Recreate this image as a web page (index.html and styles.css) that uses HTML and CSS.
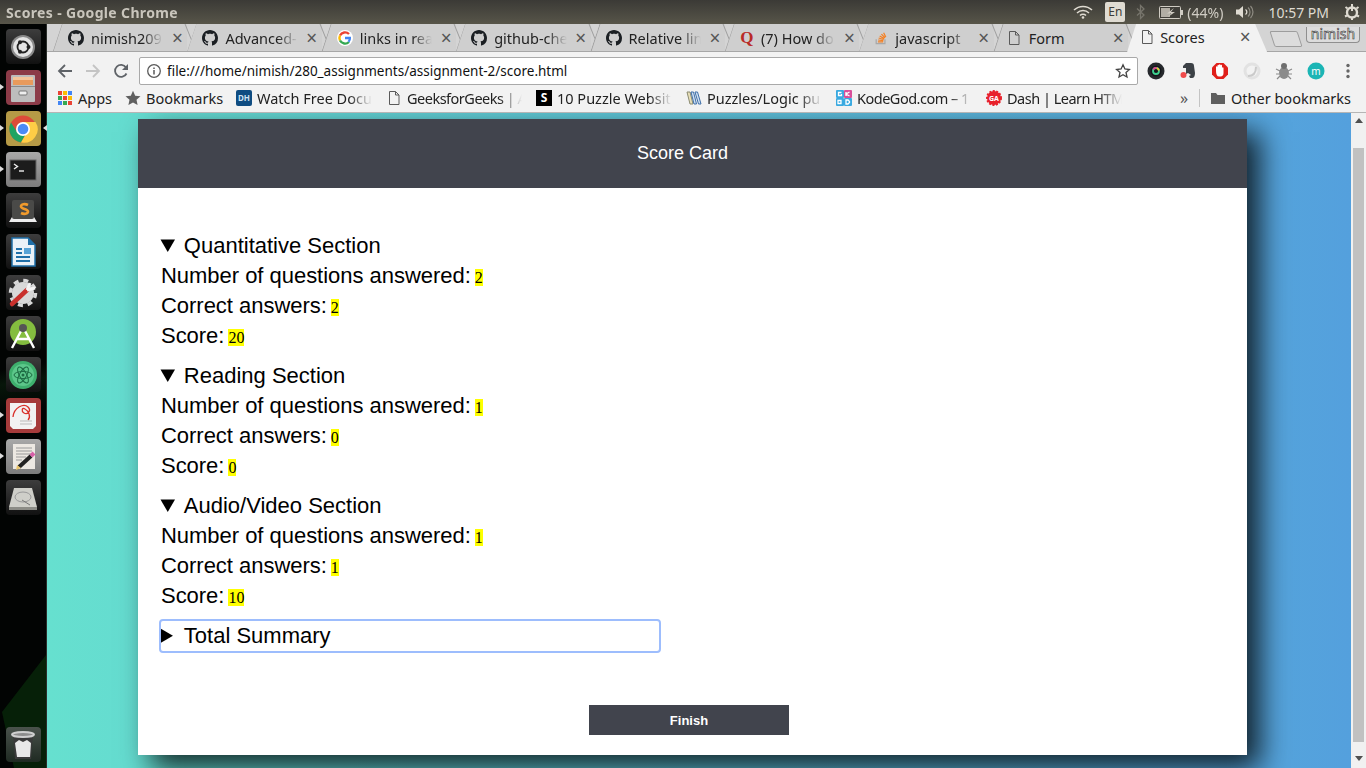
FILE: index.html
```html
<!DOCTYPE html>
<html lang="en">
<head>
  <meta charset="utf-8" />
  <title>Scores</title>
  <link rel="stylesheet" href="styles.css">
</head>
<body>
  <svg class="defs" width="0" height="0">
    <symbol id="gh" viewBox="0 0 16 16"><path fill="#1b1f23" d="M8 0C3.58 0 0 3.58 0 8c0 3.54 2.29 6.53 5.47 7.59.4.07.55-.17.55-.38 0-.19-.01-.82-.01-1.49-2.01.37-2.53-.49-2.69-.94-.09-.23-.48-.94-.82-1.13-.28-.15-.68-.52-.01-.53.63-.01 1.08.58 1.23.82.72 1.21 1.87.87 2.33.66.07-.52.28-.87.51-1.07-1.78-.2-3.64-.89-3.64-3.95 0-.87.31-1.59.82-2.15-.08-.2-.36-1.02.08-2.12 0 0 .67-.21 2.2.82.64-.18 1.32-.27 2-.27s1.36.09 2 .27c1.53-1.04 2.2-.82 2.2-.82.44 1.1.16 1.92.08 2.12.51.56.82 1.27.82 2.15 0 3.07-1.87 3.75-3.65 3.95.29.25.54.73.54 1.48 0 1.07-.01 1.93-.01 2.2 0 .21.15.46.55.38A8.01 8.01 0 0 0 16 8c0-4.42-3.58-8-8-8z"/></symbol>
    <symbol id="doc" viewBox="0 0 16 16"><path fill="none" stroke="#5a5a5a" d="M3.500 1.500h6l3.500 3.500v9.500h-9.500zM9.500 1.500v3.500h3.500"/></symbol>
  </svg>

  <!-- UNITY PANEL -->
  <header class="panel">
    <span class="panel__title">Scores - Google Chrome</span>
    <div class="panel__tray">
      <svg class="tray-wifi" width="20" height="14" viewBox="0 0 20 14"><g fill="none" stroke="#dfdbd2" stroke-width="1.500"><path d="M1 5a13 13 0 0 1 18 0"/><path d="M4 8a8.500 8.500 0 0 1 12 0"/><path d="M7 10.500a4.200 4.200 0 0 1 6 0"/></g><circle cx="10" cy="12.500" r="1.300" fill="#dfdbd2"/></svg>
      <span class="tray-lang">En</span>
      <svg width="10" height="16" viewBox="0 0 10 16"><path fill="none" stroke="#77756c" stroke-width="1.300" d="M1 4.500l7 6.500-3.500 3.500V1.500L8 5 1 11.500"/></svg>
      <span class="tray-batt">
        <svg width="24" height="13" viewBox="0 0 24 13"><rect x=".5" y=".5" width="21" height="12" rx="1" fill="#3f3e39" stroke="#dfdbd2"/><rect x="2" y="2" width="9" height="9" fill="#bdb9b0"/><rect x="22" y="4" width="2" height="5" fill="#dfdbd2"/><path fill="#dfdbd2" d="M15 2L8 7.500h4L9 11l7-5h-4z"/></svg>
        (44%)
      </span>
      <svg width="20" height="14" viewBox="0 0 20 14"><path fill="#dfdbd2" d="M1 4.500h3L8 1v12L4 9.500H1z"/><path fill="none" stroke="#dfdbd2" stroke-width="1.300" d="M10.500 4.500a3 3 0 0 1 0 5"/><path fill="none" stroke="#8f8c83" stroke-width="1.200" d="M13 2.500a6 6 0 0 1 0 9M15.500 1a8.500 8.500 0 0 1 0 12"/></svg>
      <span class="tray-time">10:57 PM</span>
      <svg width="16" height="16" viewBox="0 0 16 16"><circle cx="8" cy="8.500" r="5" fill="none" stroke="#dfdbd2" stroke-width="2.400"/><path stroke="#dfdbd2" stroke-width="2" d="M8 0v7M1.500 3l2 1.500M14.500 3l-2 1.500M1 12.500l2-1M15 12.500l-2-1M8 14v2"/></svg>
    </div>
  </header>

  <div class="desktop">
    <!-- LAUNCHER -->
    <nav class="launcher">
      <div class="tile tile--dark">
        <svg width="34" height="34" viewBox="0 0 34 34"><circle cx="17" cy="17" r="12" fill="#8a8a8a"/><circle cx="17" cy="17" r="10" fill="#e4e4e4"/><circle cx="17" cy="17" r="5.500" fill="none" stroke="#222" stroke-width="1.800"/><circle cx="22.500" cy="17" r="2" fill="#222"/><circle cx="14" cy="12.200" r="2" fill="#222"/><circle cx="14" cy="21.800" r="2" fill="#222"/></svg>
      </div>
      <div class="tile tile--maroon tile--open">
        <svg width="34" height="34" viewBox="0 0 34 34"><rect x="5" y="4" width="24" height="27" rx="1" fill="#bdbdbd"/><rect x="7" y="6" width="20" height="8" fill="#e89a5c"/><rect x="7" y="6" width="20" height="3" fill="#f4c49a"/><rect x="5" y="15" width="24" height="1" fill="#8a8a8a"/><rect x="13" y="20" width="8" height="4" rx="1" fill="#eee" stroke="#777"/></svg>
      </div>
      <div class="tile tile--gold tile--open tile--active">
        <svg width="34" height="34" viewBox="0 0 34 34"><circle cx="17" cy="17" r="13.500" fill="#dd4b39"/><path fill="#1da462" d="M5 10.500A13.500 13.500 0 0 0 15 30.400l6-10.400-4 3-6-3z"/><path fill="#ffcd46" d="M17 10h12.500A13.500 13.500 0 0 1 15 30.400l6-10.400a7 7 0 0 0 1-6z"/><circle cx="17" cy="17" r="7" fill="#fff"/><circle cx="17" cy="17" r="5.300" fill="#4c8bf5"/></svg>
      </div>
      <div class="tile tile--grey tile--open">
        <svg width="34" height="34" viewBox="0 0 34 34"><rect x="4" y="7" width="26" height="20" fill="#1c1c1c" stroke="#666"/><path fill="none" stroke="#eee" stroke-width="1.400" d="M8 11l3.500 2.500L8 16"/><path stroke="#eee" stroke-width="1.400" d="M13 18h5"/></svg>
      </div>
      <div class="tile tile--dark">
        <svg width="34" height="34" viewBox="0 0 34 34"><path fill="#eee" d="M3 28l3-5h22l3 5z"/><rect x="6" y="6" width="22" height="19" rx="2" fill="#4a4a48"/><path fill="none" stroke="#f09a2c" stroke-width="2.600" d="M22 11c-3-1.500-7-1-7 1.500s7 2.500 7 5-4 3-7 1.500"/></svg>
      </div>
      <div class="tile tile--dark">
        <svg width="34" height="34" viewBox="0 0 34 34"><path fill="#eaf1f7" stroke="#1f6fa8" stroke-width="1.500" d="M6 3h16l7 7v21H6z"/><path fill="#1f6fa8" d="M22 3l7 7h-7z"/><path stroke="#1f6fa8" stroke-width="2" d="M10 14h6M10 18h6M10 22h14M10 26h14"/><rect x="18" y="13" width="7" height="6" fill="#58a3d6"/></svg>
      </div>
      <div class="tile tile--dark">
        <svg width="34" height="34" viewBox="0 0 34 34"><circle cx="17" cy="17" r="11" fill="#d8d8d8"/><circle cx="17" cy="17" r="12.500" fill="none" stroke="#d8d8d8" stroke-width="3.500" stroke-dasharray="5 4.800"/><path stroke="#c9302c" stroke-width="4.500" stroke-linecap="round" d="M6 28L21 14"/><path fill="none" stroke="#f4f4f4" stroke-width="3" d="M21 14l3-7M21 14l8-2"/></svg>
      </div>
      <div class="tile tile--dark">
        <svg width="34" height="34" viewBox="0 0 34 34"><circle cx="17" cy="15" r="13" fill="#84bd3f"/><path fill="none" stroke="#fff" stroke-width="2.400" d="M6 31l9-17M28 31l-9-17M11 22h12"/><circle cx="17" cy="11" r="4" fill="#555"/></svg>
      </div>
      <div class="tile tile--dark">
        <svg width="34" height="34" viewBox="0 0 34 34"><circle cx="17" cy="17" r="14" fill="#3eaf6d"/><circle cx="17" cy="17" r="11" fill="#5cc78a"/><g fill="none" stroke="#1d6b43"><ellipse cx="17" cy="17" rx="9" ry="3.500"/><ellipse cx="17" cy="17" rx="9" ry="3.500" transform="rotate(60 17 17)"/><ellipse cx="17" cy="17" rx="9" ry="3.500" transform="rotate(120 17 17)"/></g><circle cx="17" cy="17" r="1.500" fill="#1d6b43"/></svg>
      </div>
      <div class="tile tile--red tile--open">
        <svg width="34" height="34" viewBox="0 0 34 34"><path fill="#f2f2f2" d="M4 4h26v23l-3 3H7l-3-3z"/><path fill="none" stroke="#d9312b" stroke-width="1.300" d="M7 18C8 8 18 4 22 8s-1 8-4 6-2-6 1-4c4 2 6 8 3 11"/><path stroke="#bbb" d="M14 22h12M14 25h12"/></svg>
      </div>
      <div class="tile tile--grey tile--open">
        <svg width="34" height="34" viewBox="0 0 34 34"><rect x="7" y="4" width="22" height="25" fill="#ece8e2"/><path stroke="#9a9a9a" d="M10 8h16M10 11h16M10 14h16M10 17h10M10 20h6"/><path stroke="#222" stroke-width="4" d="M13 27l12-11"/><path stroke="#d75fa8" stroke-width="4" d="M25 16l3-3"/><path fill="#e9c46a" d="M10 30l1-5 4 3z"/></svg>
      </div>
      <div class="tile tile--dark">
        <svg width="34" height="34" viewBox="0 0 34 34"><path fill="#cfcfc9" d="M8 7h18l5 19H3z"/><path fill="#8c8c86" d="M3 26h28v3H3z"/><ellipse cx="17" cy="16" rx="8" ry="5" fill="none" stroke="#999"/><path stroke="#777" d="M16 19l8 5"/></svg>
      </div>
      <div class="tile tile--trash">
        <svg width="34" height="34" viewBox="0 0 34 34"><path fill="#3a3a3a" d="M7 7h20l-2 24H9z"/><path fill="#e8e8e8" d="M9 15l4-3 4 2 4-2 4 3-1 14H11z"/><ellipse cx="17" cy="6.500" rx="11" ry="2.500" fill="#8c8c8c" stroke="#cfcfcf" stroke-width="2"/></svg>
      </div>
    </nav>

    <div class="browser">
      <!-- PESTAÑAS -->
      <div class="tabs">
        <div class="tab"><svg class="fav" viewBox="0 0 16 16"><use href="#gh"/></svg><span class="tab__text">nimish209</span><span class="tab__close">×</span></div>
        <div class="tab"><svg class="fav" viewBox="0 0 16 16"><use href="#gh"/></svg><span class="tab__text">Advanced-</span><span class="tab__close">×</span></div>
        <div class="tab">
          <svg class="fav" viewBox="0 0 16 16"><circle cx="8" cy="8" r="8" fill="#fff"/><path fill="none" stroke="#ea4335" stroke-width="2.400" d="M3 5.500A5.700 5.700 0 0 1 12 4"/><path fill="none" stroke="#fbbc05" stroke-width="2.400" d="M3 5.500a5.700 5.700 0 0 0 0 5"/><path fill="none" stroke="#34a853" stroke-width="2.400" d="M3 10.500a5.700 5.700 0 0 0 9 1.500"/><path fill="#4285f4" d="M8 6.800h6v1.200c0 2-.8 3.400-1.600 4.400l-1.800-1.400c.5-.4.9-1 1-1.800H8z"/></svg>
          <span class="tab__text">links in rea</span><span class="tab__close">×</span></div>
        <div class="tab"><svg class="fav" viewBox="0 0 16 16"><use href="#gh"/></svg><span class="tab__text">github-che</span><span class="tab__close">×</span></div>
        <div class="tab"><svg class="fav" viewBox="0 0 16 16"><use href="#gh"/></svg><span class="tab__text">Relative lin</span><span class="tab__close">×</span></div>
        <div class="tab"><span class="fav fav--quora">Q</span><span class="tab__text">(7) How do</span><span class="tab__close">×</span></div>
        <div class="tab">
          <svg class="fav fav--so" viewBox="0 0 16 16"><path fill="none" stroke="#a8a8a8" stroke-width="1.400" d="M2.500 9.500v5h10v-5"/><path stroke="#f48024" stroke-width="1.400" d="M4.500 12.500h6M4.700 10.300l6 .6M5.300 8l5.800 1.700M6.500 5.700l5.200 3M8.500 3.500l4 4.200M11 2l2.500 5"/></svg>
          <span class="tab__text">javascript</span><span class="tab__close">×</span></div>
        <div class="tab"><svg class="fav fav--doc" viewBox="0 0 16 16"><use href="#doc"/></svg><span class="tab__text tab__text--full">Form</span><span class="tab__close">×</span></div>
        <div class="tab tab--active"><svg class="fav fav--doc" viewBox="0 0 16 16"><use href="#doc"/></svg><span class="tab__text tab__text--full">Scores</span><span class="tab__close">×</span></div>
        <div class="tab-new"></div>
        <span class="profile">nimish</span>
      </div>

      <!-- BARRA DE DIRECCIÓN -->
      <div class="toolbar">
        <svg class="nav" viewBox="0 0 16 16"><path fill="none" stroke="#5f6368" stroke-width="1.800" d="M15 8H2M8 2L2 8l6 6"/></svg>
        <svg class="nav" viewBox="0 0 16 16"><path fill="none" stroke="#c4c4c4" stroke-width="1.800" d="M1 8h13M8 2l6 6-6 6"/></svg>
        <svg class="nav" viewBox="0 0 16 16"><path fill="none" stroke="#5f6368" stroke-width="1.800" d="M13.500 10.500A6 6 0 1 1 13 4.500"/><path fill="#5f6368" d="M15 1v6H9z"/></svg>
        <div class="omnibox">
          <svg width="16" height="16" viewBox="0 0 16 16"><circle cx="8" cy="8" r="6.300" fill="none" stroke="#5a5a5a" stroke-width="1.300"/><path stroke="#5a5a5a" stroke-width="1.500" d="M8 7v4.500M8 4.500v1.500"/></svg>
          <span class="omnibox__url">file:///home/nimish/280_assignments/assignment-2/score.html</span>
          <svg width="16" height="16" viewBox="0 0 16 16"><path fill="none" stroke="#444" stroke-width="1.300" d="M8 1.800l1.900 4.200 4.500.5-3.400 3 1 4.500L8 11.700 4 14l1-4.500-3.400-3 4.500-.5z"/></svg>
        </div>
        <div class="extensions">
          <svg class="ext" viewBox="0 0 18 18"><circle cx="9" cy="9" r="8.500" fill="#26282c"/><circle cx="9" cy="9" r="5.500" fill="#14161a"/><circle cx="9" cy="9" r="3" fill="none" stroke="#3ecf8e" stroke-width="1.800"/><path fill="none" stroke="#e6398f" stroke-width="1.800" d="M6.300 7.700a3 3 0 0 1 3.500-1.600"/><path fill="none" stroke="#f2c230" stroke-width="1.800" d="M9.800 6.100a3 3 0 0 1 2.100 2.400"/></svg>
          <svg class="ext" viewBox="0 0 18 18"><path fill="#3c4146" d="M4 4l3-3h5c2 0 3 1 3 3l1 7c0 3-1 5-3 5h-2l-1-2 2-1-3-2-2 1V6H4z"/><circle cx="4.500" cy="13" r="3" fill="#f04b4b"/></svg>
          <svg class="ext" viewBox="0 0 18 18"><path fill="#e0201b" d="M5.500 1h7L17 5.500v7L12.500 17h-7L1 12.500v-7z"/><path fill="#fff" d="M5 9V5c0-1 1.500-1 1.500 0V3.500c0-1 1.500-1 1.500 0V3c0-1 1.500-1 1.500 0v.5c0-1 1.500-1 1.500 0V6c0-1 1.500-1 1.500 0v5c0 2-1 3.500-3 3.500H8c-2 0-3-2-3-5.500z"/></svg>
          <svg class="ext" viewBox="0 0 18 18"><circle cx="9" cy="9" r="7" fill="none" stroke="#e2e2e2" stroke-width="3"/><path fill="none" stroke="#cacaca" stroke-width="2" d="M5 14c5 0 8-3 8-9"/></svg>
          <svg class="ext" viewBox="0 0 18 18"><ellipse cx="9" cy="11" rx="5" ry="6" fill="#8b8b8b"/><circle cx="9" cy="4" r="3" fill="#6f6f6f"/><path stroke="#8b8b8b" stroke-width="1.200" d="M1 7l4 2M17 7l-4 2M1 12h3M17 12h-3M2 17l3-3M16 17l-3-3"/></svg>
          <svg class="ext" viewBox="0 0 18 18"><circle cx="9" cy="9" r="8.500" fill="#1bb5b5"/><text x="9" y="12.500" class="ext__m">m</text></svg>
        </div>
        <svg class="menu" viewBox="0 0 4 16"><circle cx="2" cy="2.500" r="1.700" fill="#666"/><circle cx="2" cy="8" r="1.700" fill="#666"/><circle cx="2" cy="13.500" r="1.700" fill="#666"/></svg>
      </div>

      <!-- MARCADORES -->
      <div class="bookmarks">
        <div class="bm bm--apps">
          <svg class="fav" viewBox="0 0 16 16"><g><rect x="1" y="1" width="4" height="4" fill="#ea4335"/><rect x="6" y="1" width="4" height="4" fill="#fbbc05"/><rect x="11" y="1" width="4" height="4" fill="#4285f4"/><rect x="1" y="6" width="4" height="4" fill="#34a853"/><rect x="6" y="6" width="4" height="4" fill="#ea4335"/><rect x="11" y="6" width="4" height="4" fill="#fbbc05"/><rect x="1" y="11" width="4" height="4" fill="#4285f4"/><rect x="6" y="11" width="4" height="4" fill="#34a853"/><rect x="11" y="11" width="4" height="4" fill="#ea4335"/></g></svg>
          <span>Apps</span>
        </div>
        <div class="bm bm--plain">
          <svg class="fav" viewBox="0 0 16 16"><path fill="#5f5f5f" d="M8 .8l2.200 4.900 5.300.6-4 3.500 1.100 5.300L8 12.400l-4.600 2.700 1.100-5.300-4-3.500 5.300-.6z"/></svg>
          <span>Bookmarks</span>
        </div>
        <div class="bm"><span class="fav fav--dh">DH</span><span class="bm__text">Watch Free Docu</span></div>
        <div class="bm"><svg class="fav" viewBox="0 0 16 16"><use href="#doc"/></svg><span class="bm__text bm__text--tight">GeeksforGeeks | A</span></div>
        <div class="bm"><span class="fav fav--s">S</span><span class="bm__text">10 Puzzle Websit</span></div>
        <div class="bm">
          <svg class="fav" viewBox="0 0 16 16"><path fill="#e8dfb8" stroke="#8a8a70" d="M1 2l3 0 3 12-3 0z"/><path fill="#cfe0f2" stroke="#3d6ea8" d="M5 2l2.500 0 3 12-2.500 0z"/><path fill="#cfe0f2" stroke="#3d6ea8" d="M9 2l2.500 0 3.500 12-2.500 0z"/></svg>
          <span class="bm__text">Puzzles/Logic pu</span></div>
        <div class="bm">
          <svg class="fav" viewBox="0 0 16 16"><rect x="0" y="0" width="8" height="8" rx="1" fill="#39a9e0"/><rect x="8" y="0" width="8" height="8" rx="1" fill="#d94f9a"/><rect x="0" y="8" width="8" height="8" rx="1" fill="#39a9e0"/><rect x="8" y="8" width="8" height="8" rx="1" fill="#39a9e0"/><path stroke="#fff" stroke-width="1.300" fill="none" d="M5.500 2.500h-3v3h3V4M10 2v4M13.500 2L10 4l3.500 2M2 10.500h3v3H2zM10 10h2l1.500 1.500v1L12 14h-2z"/></svg>
          <span class="bm__text bm__text--tight">KodeGod.com – 1</span></div>
        <div class="bm">
          <svg class="fav" viewBox="0 0 16 16"><circle cx="8" cy="8" r="7" fill="#e8212b" stroke="#e8212b" stroke-dasharray="2 1.500" stroke-width="2"/><text x="8" y="11" class="fav__ga">GA</text></svg>
          <span class="bm__text bm__text--tight">Dash | Learn HTM</span></div>
        <span class="bm-more">»</span>
        <span class="bm-sep"></span>
        <div class="bm bm--plain bm--other">
          <svg class="fav" viewBox="0 0 16 16"><path fill="#5f5f5f" d="M1 3h5l1.500 2H15v9H1z"/></svg>
          <span>Other bookmarks</span>
        </div>
      </div>

      <!-- PÁGINA -->
      <div class="viewport">
        <main class="page">
          <section class="card">
            <h1 class="card__head">Score Card</h1>
            <div class="card__body">
              <details class="section" open>
                <summary>Quantitative Section</summary>
                <p><span class="label">Number of questions answered:</span> <mark>2</mark></p>
                <p><span class="label">Correct answers:</span> <mark>2</mark></p>
                <p><span class="label">Score:</span> <mark>20</mark></p>
              </details>
              <details class="section" open>
                <summary>Reading Section</summary>
                <p><span class="label">Number of questions answered:</span> <mark>1</mark></p>
                <p><span class="label">Correct answers:</span> <mark>0</mark></p>
                <p><span class="label">Score:</span> <mark>0</mark></p>
              </details>
              <details class="section" open>
                <summary>Audio/Video Section</summary>
                <p><span class="label">Number of questions answered:</span> <mark>1</mark></p>
                <p><span class="label">Correct answers:</span> <mark>1</mark></p>
                <p><span class="label">Score:</span> <mark>10</mark></p>
              </details>
              <details class="section">
                <summary class="is-focused">Total Summary</summary>
              </details>
              <button class="finish" type="button">Finish</button>
            </div>
          </section>
        </main>
        <div class="scrollbar">
          <span class="scrollbar__up"></span>
          <span class="scrollbar__thumb"></span>
          <span class="scrollbar__down"></span>
        </div>
      </div>
    </div>
  </div>
</body>
</html>
```

FILE: styles.css
```css
/* ===== RESET ===== */
*, *::before, *::after {
  margin: 0;
  padding: 0;
  box-sizing: border-box;
}

html, body {
  width: 1366px;
  height: 768px;
  overflow: hidden;
}

body {
  display: flex;
  flex-direction: column;
  font-family: "Noto Sans", sans-serif;
  background: #000;
}

.defs {
  position: absolute;
}

/* ===== UNITY PANEL ===== */
.panel {
  height: 24px;
  flex: none;
  display: flex;
  align-items: center;
  justify-content: space-between;
  padding: 0 6px;
  background: linear-gradient(to bottom, #3b3a36, #575549);
  color: #dfdbd2;
}

.panel__title {
  font-size: 14px;
  font-weight: 700;
  letter-spacing: .35px;
  opacity: .85;
}

.panel__tray {
  display: flex;
  align-items: center;
  font-size: 14px;
}

.tray-lang {
  width: 20px;
  height: 20px;
  margin: 0 11px 0 12px;
  border-radius: 2px;
  background: #dfdbd2;
  color: #3c3b37;
  font-size: 12px;
  line-height: 20px;
  text-align: center;
}

.tray-batt {
  display: flex;
  align-items: center;
  gap: 4px;
  margin: 0 12px 0 13px;
  opacity: .9;
}

.tray-time {
  margin: 0 15px 0 13px;
}

/* ===== LAUNCHER ===== */
.desktop {
  flex: 1;
  min-height: 0;
  display: flex;
}

.launcher {
  position: relative;
  width: 47px;
  flex: none;
  display: flex;
  flex-direction: column;
  align-items: center;
  gap: 6px;
  padding: 5px 0 6px;
  border-right: 1px solid #2b2f2b;
  background: linear-gradient(170deg, #020403 46%, #07160a 48%, #020403 52%);
}

/* triangulos del fondo de pantalla */
.launcher::before {
  content: '';
  position: absolute;
  inset: 0;
  background: #062008;
  clip-path: polygon(100% 631px, 2px 688px, 14px 744px, 100% 744px);
}

.tile {
  position: relative;
  width: 35px;
  height: 35px;
  display: flex;
  align-items: center;
  justify-content: center;
  border-radius: 4px;
}

.tile--dark {
  background: linear-gradient(to bottom, #3d3d3d, #111);
}
.tile--maroon {
  background: #8c3b48;
}
.tile--gold {
  background: #b59a46;
}
.tile--grey {
  background: linear-gradient(to bottom, #a8a8a8, #7c7c7c);
}
.tile--red {
  background: #a63b3b;
}
.tile--trash {
  margin-top: auto;
  background: linear-gradient(to bottom, #4a524c, #1f2a22);
}

/* puntito de app abierta */
.tile--open::before {
  content: '';
  position: absolute;
  left: -6px;
  top: 14px;
  border: 3.5px solid transparent;
  border-left: 4px solid #ddd;
}
.tile--active::after {
  content: '';
  position: absolute;
  right: -6px;
  top: 14px;
  border: 3.5px solid transparent;
  border-right: 4px solid #ddd;
}

/* ===== NAVEGADOR ===== */
.browser {
  flex: 1;
  min-width: 0;
  display: flex;
  flex-direction: column;
}

.tabs {
  height: 28px;
  flex: none;
  display: flex;
  padding-left: 6px;
  background: #d4d4d4;
  border-bottom: 1px solid #a6a6a6;
  font-size: 14.5px;
  color: #222;
  position: relative;
}

.tab {
  width: 134.4px;
  flex: none;
  display: flex;
  align-items: center;
  gap: 7px;
  padding: 1px 3px 0 15px;
  position: relative;
  background: #cfcfcf;
  clip-path: polygon(0 100%, 9px 0, 100% 0, calc(100% + 12px) 100%);
}

.tab::before {
  content: '';
  position: absolute;
  left: 4px;
  top: -2px;
  bottom: -2px;
  width: 1px;
  background: #9d9d9d;
  transform: skewX(-18deg);
}

.tab::after {
  content: '';
  position: absolute;
  right: -4px;
  top: -2px;
  bottom: -2px;
  width: 1px;
  background: #9d9d9d;
  transform: skewX(22deg);
}

.tab--active {
  width: 140px;
  height: 28px;
  margin-left: -1px;
  padding: 0 15px 2px 15px;
  gap: 5px;
  background: #f2f2f2;
  clip-path: polygon(0 100%, 9px 0, calc(100% - 12px) 0, 100% 100%);
  z-index: 2;
}

.tab--active::before,
.tab--active::after {
  display: none;
}

.tab__text {
  flex: 1;
  min-width: 0;
  overflow: hidden;
  white-space: nowrap;
  -webkit-mask-image: linear-gradient(to right, #000 72%, transparent);
  mask-image: linear-gradient(to right, #000 72%, transparent);
}

.tab__text--full {
  -webkit-mask-image: none;
  mask-image: none;
}

.tab__close {
  flex: none;
  width: 14px;
  font-size: 19px;
  line-height: 1;
  text-align: center;
  color: #555;
}

.tab-new {
  width: 28px;
  height: 16px;
  margin: 7px 0 0 5px;
  background: #dcdcdc;
  border: 1px solid #9d9d9d;
  border-radius: 2px;
  transform: skewX(18deg);
}

.profile {
  width: 54px;
  height: 16px;
  margin: 3px 6px 0 auto;
  font-size: 14px;
  line-height: 14px;
  text-align: center;
  color: #fff;
  -webkit-text-stroke: .6px #333;
  background: #dcdcdc;
  border: 1px solid #8f8f8f;
  border-top: 0;
  border-radius: 0 0 4px 4px;
}

.fav {
  width: 16px;
  height: 16px;
  flex: none;
}

.fav--doc {
  margin-left: -3px;
}

.fav--so {
  width: 14px;
}

.fav--quora {
  width: 14px;
  color: #b92b27;
  font: 700 17px/16px "Liberation Serif", serif;
  text-align: center;
}

.fav--dh {
  background: #0f4c81;
  border-radius: 2px;
  color: #cfe2f2;
  font-size: 8px;
  font-weight: 700;
  line-height: 16px;
  text-align: center;
}

.fav--s {
  background: #000;
  color: #fff;
  font-size: 12px;
  font-weight: 700;
  line-height: 16px;
  text-align: center;
}

.fav__ga {
  font-size: 7px;
  font-weight: 700;
  fill: #fff;
  text-anchor: middle;
}

/* ===== TOOLBAR ===== */
.toolbar {
  height: 36px;
  flex: none;
  display: flex;
  align-items: center;
  padding: 2px 0 0 10px;
  background: #f2f2f2;
}

.nav {
  width: 16px;
  height: 16px;
  flex: none;
  margin-right: 12px;
}

.omnibox {
  width: 999px;
  height: 28px;
  flex: none;
  margin-left: -2px;
  display: flex;
  align-items: center;
  padding: 0 6px;
  gap: 5px;
  background: #fff;
  border: 1px solid #a9a9a9;
  border-radius: 2px;
}

.omnibox__url {
  flex: 1;
  font-size: 13.5px;
  color: #111;
}

.extensions {
  display: flex;
  gap: 14px;
  margin-left: 9px;
}

.ext {
  width: 18px;
  height: 18px;
}

.ext__m {
  font-size: 10px;
  fill: #fff;
  text-anchor: middle;
}

.menu {
  width: 4px;
  height: 16px;
  margin-left: 21px;
}

/* ===== MARCADORES ===== */
.bookmarks {
  height: 25px;
  flex: none;
  display: flex;
  align-items: center;
  padding: 0 0 4px 10px;
  background: #f2f2f2;
  border-bottom: 1px solid #b5b5b5;
  font-size: 14.5px;
  color: #222;
  white-space: nowrap;
}

.bm {
  display: flex;
  align-items: center;
  gap: 5px;
  width: 150px;
  flex: none;
}

.bm--apps {
  width: 68px;
}

.bm--plain {
  width: 111px;
}

.bm__text {
  width: 115px;
  overflow: hidden;
  -webkit-mask-image: linear-gradient(to right, #000 80%, transparent);
  mask-image: linear-gradient(to right, #000 80%, transparent);
}

.bm__text--tight {
  letter-spacing: -.5px;
}

.bm-more {
  width: 10px;
  margin-left: 44px;
  font-size: 16px;
  color: #555;
}

.bm-sep {
  width: 1px;
  height: 18px;
  margin: 0 10px 0 9px;
  background: #c4c4c4;
}

.bm--other {
  width: auto;
}

/* ===== PAGINA ===== */
.viewport {
  flex: 1;
  min-height: 0;
  display: flex;
}

.page {
  flex: 1;
  min-width: 0;
  overflow: hidden;
  padding: 6px 0 0 91px;
  background: linear-gradient(to right, #66e0cf, #54a0dd);
}

.card {
  width: 1109px;
  height: 636px;
  background: #fff;
  box-shadow: 13px 13px 27px rgba(0, 0, 0, .8);
}

.card__head {
  height: 69px;
  padding-right: 20px;
  background: #41444d;
  color: #fff;
  font: 400 18px/69px "Liberation Sans", sans-serif;
  text-align: center;
}

.card__body {
  padding: 43px 0 0 23px;
  font: 22px/30px "Liberation Sans", sans-serif;
  color: #000;
}

.section {
  width: 498px;
  margin-bottom: 10px;
}

.section p {
  height: 30px;
  white-space: nowrap;
  font: 16px/30px "Liberation Serif", serif;
}

.section .label {
  font: 22px/30px "Liberation Sans", sans-serif;
  letter-spacing: -.03px;
}

.section summary {
  cursor: pointer;
  text-indent: -.5px;
}

.section mark {
  background: #ff0;
  color: #000;
}

.is-focused {
  outline: 2px solid #9dbdfd;
  border-radius: 2px;
}

.finish {
  display: block;
  width: 200px;
  height: 30px;
  margin: 54px 0 0 428px;
  border: 0;
  background: #41444d;
  color: #fff;
  font: 700 13px "Liberation Sans", sans-serif;
}

/* ===== SCROLLBAR ===== */
.scrollbar {
  width: 15px;
  flex: none;
  display: flex;
  flex-direction: column;
  align-items: center;
  background: #f1f1f1;
}

.scrollbar__up,
.scrollbar__down {
  width: 0;
  height: 0;
  border: 4px solid transparent;
  flex: none;
}

.scrollbar__up {
  margin-top: 5px;
  border-bottom: 5px solid #505050;
  border-top: 0;
}

.scrollbar__thumb {
  width: 11px;
  height: 594px;
  margin-top: 25px;
  background: #c1c1c1;
}

.scrollbar__down {
  margin-top: 14px;
  border-top: 5px solid #505050;
  border-bottom: 0;
}
```
